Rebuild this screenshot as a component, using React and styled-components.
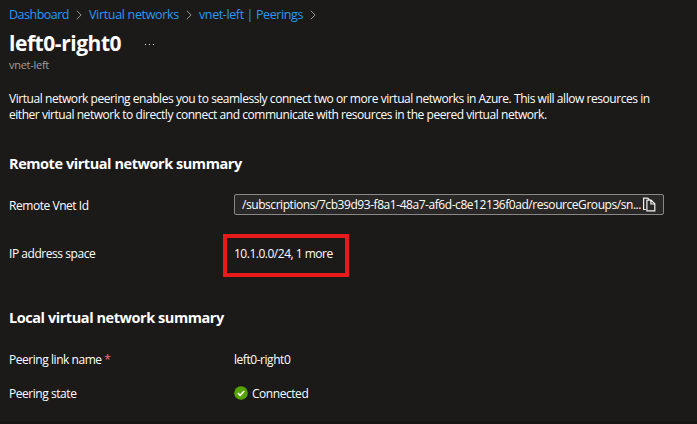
import React from "react";
import styled, { createGlobalStyle } from "styled-components";

const GlobalStyle = createGlobalStyle`
  html, body { margin: 0; background: #1b1a19; }
  * { box-sizing: border-box; }
`;

const Blade = styled.main`
  display: flex;
  flex-direction: column;
  height: 424px;
  padding: 0 9px;
  overflow: hidden;
  color: #fff;
  background: #1b1a19;
  border-bottom: 3px solid #161514;
  font: 400 12px/16px "Open Sans", "Noto Sans", sans-serif;
  letter-spacing: -0.452px;
  white-space: nowrap;
`;

const Breadcrumbs = styled.nav`
  display: flex;
  align-items: center;
  height: 18px;
  margin-top: 6px;
  font-size: 12.5px;
`;

const Crumb = styled.a`
  width: ${(p) => p.$width}px;
  color: #2899f5;
  letter-spacing: ${(p) => p.$tracking}px;
`;

const Separator = styled.svg`
  flex: none;
  width: 6px;
  height: 10px;
  margin: 0 7px;
  fill: none;
  stroke: #979593;
`;

const TitleRow = styled.header`
  display: flex;
  align-items: center;
  height: 30px;
  margin-top: 4px;
`;

const Title = styled.h1`
  width: 135px;
  margin: 0;
  font-size: 21px;
  font-weight: 700;
  line-height: 30px;
  letter-spacing: -0.45px;
`;

const MoreIcon = styled.svg`
  width: 12px;
  height: 4px;
  margin-top: 3px;
  fill: #e8e6e4;
`;

const Subtitle = styled.div`
  height: 14px;
  color: #a19f9d;
  font-size: 11px;
  line-height: 14px;
  letter-spacing: -0.27px;
`;

const Description = styled.p`
  margin: 19px 0 0;
`;

const DescriptionLine = styled.span`
  display: block;
  letter-spacing: ${(p) => p.$tracking}px;
`;

const SectionTitle = styled.h2`
  margin: 31px 0 0;
  font-size: 14.5px;
  font-weight: 700;
  line-height: 20px;
  letter-spacing: -0.44px;
`;

const Field = styled.div`
  display: grid;
  grid-template-columns: 225px 430px;
  align-items: center;
  height: ${(p) => p.$height}px;
  margin-top: ${(p) => p.$top}px;
`;

const Label = styled.span`
  padding-top: ${(p) => p.$drop || 0}px;
  padding-bottom: ${(p) => p.$lift || 0}px;
`;

const Required = styled.span`
  color: #f1707b;
`;

const CopyBox = styled.div`
  display: flex;
  align-items: center;
  height: 21px;
  padding: 0 7px;
  background: #292827;
  border: 1px solid #8a8886;
  border-radius: 2px;
`;

const CopyValue = styled.span`
  width: 401px;
  letter-spacing: -0.442px;
`;

const CopyIcon = styled.svg`
  flex: none;
  width: 14px;
  height: 15px;
  fill: none;
  stroke: #f3f2f1;
  stroke-width: 1.2;
`;

const Highlight = styled.div`
  display: flex;
  align-items: center;
  width: 126px;
  height: 43px;
  margin-left: -11px;
  padding: 0 0 3px 7px;
  border: 4px solid #e81a1a;
  letter-spacing: -0.49px;
`;

const Status = styled.span`
  display: flex;
  align-items: center;
  gap: 4px;
`;

const StatusIcon = styled.svg`
  width: 14px;
  height: 14px;
  margin-top: -2px;
`;

const crumbs = [
  { label: "Dashboard", width: 60, tracking: -0.5 },
  { label: "Virtual networks", width: 90, tracking: -0.33 },
  { label: "vnet-left | Peerings", width: 104, tracking: -0.39 },
];

export default function App() {
  return (
    <>
      <GlobalStyle />
      <Blade>
        <Breadcrumbs>
          {crumbs.map((c) => (
            <React.Fragment key={c.label}>
              <Crumb $width={c.width} $tracking={c.tracking}>{c.label}</Crumb>
              <Separator viewBox="0 0 6 10"><path d="M.8.8 5.1 5 .8 9.2" /></Separator>
            </React.Fragment>
          ))}
        </Breadcrumbs>
        <TitleRow>
          <Title>left0-right0</Title>
          <MoreIcon viewBox="0 0 12 4">
            <path d="M1 1h1v1H1zM5 1h1v1H5zM9 1h1v1H9z" />
          </MoreIcon>
        </TitleRow>
        <Subtitle>vnet-left</Subtitle>
        <Description>
          <DescriptionLine $tracking={-0.446}>
            Virtual network peering enables you to seamlessly connect two or more virtual networks in Azure. This will allow resources in
          </DescriptionLine>
          <DescriptionLine $tracking={-0.455}>
            either virtual network to directly connect and communicate with resources in the peered virtual network.
          </DescriptionLine>
        </Description>
        <SectionTitle>Remote virtual network summary</SectionTitle>
        <Field $height={21} $top={20}>
          <Label $drop={2}>Remote Vnet Id</Label>
          <CopyBox>
            <CopyValue>/subscriptions/7cb39d93-f8a1-48a7-af6d-c8e12136f0ad/resourceGroups/sn...</CopyValue>
            <CopyIcon viewBox="0 0 14 15">
              <path d="M3.8 12.5H1.6V1.1h4.2l2 2M4.9 3.1h4.2l3.7 3.7v7.1H4.9zM8.9 3.3V7h3.7" />
            </CopyIcon>
          </CopyBox>
        </Field>
        <Field $height={43} $top={19}>
          <Label $lift={3}>IP address space</Label>
          <Highlight>10.1.0.0/24, 1 more</Highlight>
        </Field>
        <SectionTitle>Local virtual network summary</SectionTitle>
        <Field $height={16} $top={24}>
          <Label>Peering link name <Required>*</Required></Label>
          <span>left0-right0</span>
        </Field>
        <Field $height={16} $top={18}>
          <Label>Peering state</Label>
          <Status>
            <StatusIcon viewBox="0 0 14 14">
              <circle cx="7" cy="7" r="6.8" fill="#57a300" />
              <path d="m3.9 7.1 2.2 2.2 4.1-4.4" fill="none" stroke="#fff" strokeWidth="1.5" />
            </StatusIcon>
            Connected
          </Status>
        </Field>
      </Blade>
    </>
  );
}
